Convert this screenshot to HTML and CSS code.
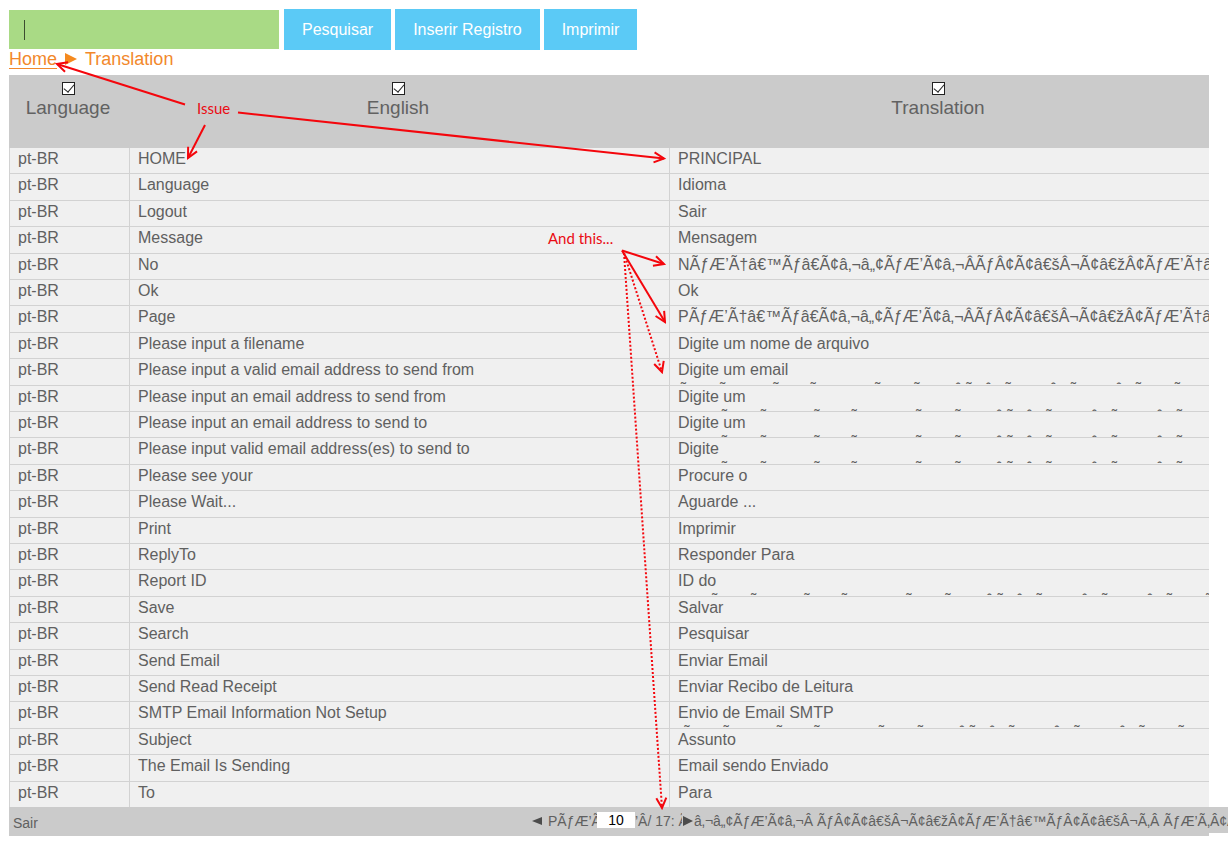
FILE: index.html
```html
<!DOCTYPE html>
<html lang="pt-BR">
<head>
<meta charset="utf-8">
<title>Translation</title>
<link rel="stylesheet" href="styles.css">
</head>
<body>
<main class="page">
  <form class="toolbar">
    <label class="search"><input class="search-input" type="text" aria-label="Pesquisar"></label>
    <button class="btn" type="button">Pesquisar</button>
    <button class="btn" type="button">Inserir Registro</button>
    <button class="btn" type="button">Imprimir</button>
  </form>
  <nav class="crumbs">
    <a href="#">Home</a>
    <svg class="crumb-arrow" viewBox="0 0 12 12" aria-hidden="true"><path d="M0 0 12 6 0 12Z"/></svg>
    <span>Translation</span>
  </nav>
  <table class="grid">
    <thead>
      <tr>
        <th class="col-lang"><label class="head"><input class="tick" type="checkbox" checked>Language</label></th>
        <th><label class="head"><input class="tick" type="checkbox" checked>English</label></th>
        <th><label class="head"><input class="tick" type="checkbox" checked>Translation</label></th>
      </tr>
    </thead>
    <tbody>
      <tr><td>pt-BR</td><td>HOME</td><td>PRINCIPAL</td></tr>
      <tr><td>pt-BR</td><td>Language</td><td>Idioma</td></tr>
      <tr><td>pt-BR</td><td>Logout</td><td>Sair</td></tr>
      <tr><td>pt-BR</td><td>Message</td><td>Mensagem</td></tr>
      <tr><td>pt-BR</td><td>No</td><td><div class="clip">NÃƒÆ’Ã†â€™Ãƒâ€Ã¢â‚¬â„¢ÃƒÆ’Ã¢â‚¬ÂÃƒÂ¢Ã¢â€šÂ¬Ã¢â€žÂ¢ÃƒÆ’Ã†â€</div></td></tr>
      <tr><td>pt-BR</td><td>Ok</td><td>Ok</td></tr>
      <tr><td>pt-BR</td><td>Page</td><td><div class="clip">PÃƒÆ’Ã†â€™Ãƒâ€Ã¢â‚¬â„¢ÃƒÆ’Ã¢â‚¬ÂÃƒÂ¢Ã¢â€šÂ¬Ã¢â€žÂ¢ÃƒÆ’Ã†â€</div></td></tr>
      <tr><td>pt-BR</td><td>Please input a filename</td><td>Digite um nome de arquivo</td></tr>
      <tr><td>pt-BR</td><td>Please input a valid email address to send from</td><td><div class="clip">Digite um email<br>ÃƒÆ’Ã†â€™Ãƒâ€Ã¢â‚¬â„¢ÃƒÆ’Ã¢â‚¬ÂÃƒÂ¢Ã¢â€šÂ¬Ã¢â€žÂ¢ÃƒÆ’Ã†</div></td></tr>
      <tr><td>pt-BR</td><td>Please input an email address to send from</td><td><div class="clip">Digite um<br>enderÃƒÆ’Ã†â€™Ãƒâ€Ã¢â‚¬â„¢ÃƒÆ’Ã¢â‚¬ÂÃƒÂ¢Ã¢â€šÂ¬Ã¢â€žÂ¢ÃƒÆ’Ã†</div></td></tr>
      <tr><td>pt-BR</td><td>Please input an email address to send to</td><td><div class="clip">Digite um<br>enderÃƒÆ’Ã†â€™Ãƒâ€Ã¢â‚¬â„¢ÃƒÆ’Ã¢â‚¬ÂÃƒÂ¢Ã¢â€šÂ¬Ã¢â€žÂ¢ÃƒÆ’Ã†</div></td></tr>
      <tr><td>pt-BR</td><td>Please input valid email address(es) to send to</td><td><div class="clip">Digite<br>enderÃƒÆ’Ã†â€™Ãƒâ€Ã¢â‚¬â„¢ÃƒÆ’Ã¢â‚¬ÂÃƒÂ¢Ã¢â€šÂ¬Ã¢â€žÂ¢ÃƒÆ’Ã†</div></td></tr>
      <tr><td>pt-BR</td><td>Please see your</td><td>Procure o</td></tr>
      <tr><td>pt-BR</td><td>Please Wait...</td><td>Aguarde ...</td></tr>
      <tr><td>pt-BR</td><td>Print</td><td>Imprimir</td></tr>
      <tr><td>pt-BR</td><td>ReplyTo</td><td>Responder Para</td></tr>
      <tr><td>pt-BR</td><td>Report ID</td><td><div class="clip">ID do<br>relatÃƒÆ’Ã†â€™Ãƒâ€Ã¢â‚¬â„¢ÃƒÆ’Ã¢â‚¬ÂÃƒÂ¢Ã¢â€šÂ¬Ã¢â€žÂ¢ÃƒÆ’Ã†</div></td></tr>
      <tr><td>pt-BR</td><td>Save</td><td>Salvar</td></tr>
      <tr><td>pt-BR</td><td>Search</td><td>Pesquisar</td></tr>
      <tr><td>pt-BR</td><td>Send Email</td><td>Enviar Email</td></tr>
      <tr><td>pt-BR</td><td>Send Read Receipt</td><td>Enviar Recibo de Leitura</td></tr>
      <tr><td>pt-BR</td><td>SMTP Email Information Not Setup</td><td><div class="clip">Envio de Email SMTP<br>iÃƒÆ’Ã†â€™Ãƒâ€Ã¢â‚¬â„¢ÃƒÆ’Ã¢â‚¬ÂÃƒÂ¢Ã¢â€šÂ¬Ã¢â€žÂ¢ÃƒÆ’Ã†</div></td></tr>
      <tr><td>pt-BR</td><td>Subject</td><td>Assunto</td></tr>
      <tr><td>pt-BR</td><td>The Email Is Sending</td><td>Email sendo Enviado</td></tr>
      <tr><td>pt-BR</td><td>To</td><td>Para</td></tr>
    </tbody>
  </table>
  <footer class="footer">
    <a class="logout" href="#">Sair</a>
    <div class="pager">
      <button class="step" type="button" aria-label="Anterior"><svg viewBox="0 0 10 10"><path d="M10 1V9L0 5Z"/></svg></button>
      <span class="piece piece-label">PÃƒÆ’Ã†</span>
      <input class="page-no" type="text" value="10" aria-label="Page">
      <span class="piece piece-total">’Â/ 17: Ã</span>
      <button class="step" type="button" aria-label="Seguinte"><svg viewBox="0 0 10 10"><path d="M0 0V10L10 5Z"/></svg></button>
      <span>â‚¬â„¢ÃƒÆ’Ã¢â‚¬Â ÃƒÂ¢Ã¢â€šÂ¬Ã¢â€žÂ¢ÃƒÆ’Ã†â€™ÃƒÂ¢Ã¢â€šÂ¬Ã‚Â ÃƒÆ’Ã‚Â¢Ã¢</span>
    </div>
  </footer>
</main>
<svg class="notes" width="1228" height="845" viewBox="0 0 1228 845">
  <defs>
    <marker id="tip" viewBox="0 0 14 14" refX="12" refY="7" markerWidth="14" markerHeight="14" markerUnits="userSpaceOnUse" orient="auto">
      <path d="M2 2 12 7 2 12"/>
    </marker>
  </defs>
  <g class="solid">
    <path d="M185 104.500 57 64"/>
    <path d="M205 125 188 158"/>
    <path d="M238 112.500 664 158.500"/>
    <path d="M622 250.500 664 264"/>
    <path d="M622 250.500 665 322"/>
  </g>
  <g class="dotted">
    <path d="M624 253 662 372"/>
    <path d="M624 253 662 808"/>
  </g>
  <text x="197" y="114">Issue</text>
  <text x="548" y="244">And this...</text>
</svg>
</body>
</html>
```
FILE: styles.css
```css
* { box-sizing: border-box; }

body {
  position: relative;
  margin: 0;
  overflow: hidden;
  background: #fff;
  color: #606060;
  font: 16px/20px "Liberation Sans", Arial, sans-serif;
}

input, button { font: inherit; }

.page { padding: 9px 19px 9px 9px; }

.toolbar { display: flex; align-items: center; gap: 4px; height: 41px; }

.search { position: relative; width: 270px; margin-right: 1px; }

.search-input {
  display: block;
  width: 100%;
  height: 39px;
  padding: 0 15px;
  border: 0;
  background: #a9da85;
}

.search::after {
  content: "";
  position: absolute;
  left: 15px;
  top: 10px;
  width: 1px;
  height: 20px;
  background: #3c4c30;
}

.btn {
  height: 41px;
  padding: 0 18px;
  border: 0;
  background: #5bcaf6;
  color: #fff;
}

.crumbs {
  display: flex;
  align-items: center;
  gap: 8px;
  height: 25px;
  padding-bottom: 7px;
  color: #f2882b;
  font-size: 18px;
}

.crumbs a { color: inherit; text-underline-offset: 3px; text-decoration-thickness: 1px; }
.crumb-arrow { width: 12px; height: 12px; fill: #f58a1f; }

.grid {
  width: 100%;
  border-collapse: separate;
  border-spacing: 0;
  table-layout: fixed;
  background: #f0f0f0;
}

.grid th {
  height: 73px;
  padding: 7px 2px 0 0;
  background: #cbcbcb;
  font-size: 19px;
  font-weight: normal;
  vertical-align: top;
  color: #626262;
}

.grid .col-lang { width: 10%; }

.head { display: flex; flex-direction: column; align-items: center; gap: 3px; }

.tick {
  appearance: none;
  width: 13px;
  height: 13px;
  margin: 0;
  border: 1px solid #222;
  background: #fff;
}

.tick:checked::after {
  content: "";
  display: block;
  width: 9px;
  height: 5px;
  margin: 2px 1px;
  border: solid #222;
  border-width: 0 0 1px 1px;
  transform: translateY(-1px) rotate(-50deg);
}

.grid td {
  height: 26px;
  padding: 1px 0 0 8px;
  border-bottom: 1px solid #d2d2d2;
  border-left: 1px solid #d2d2d2;
  vertical-align: top;
  white-space: nowrap;
}

.grid tr:nth-child(5n+2) td,
.grid tr:nth-child(5n+4) td { height: 27px; }
.grid tbody tr:last-child td { height: 25px; border-bottom: 0; }

.clip {
  height: 25px;
  margin-top: -1px;
  overflow: hidden;
  line-height: 22px;
}

.footer {
  display: grid;
  grid-template-columns: 43.5% max-content;
  height: 29px;
  background: #cbcbcb;
  font-size: 14px;
}

.logout { padding: 6px 4px 0; color: inherit; text-decoration: none; }

.pager {
  display: flex;
  align-items: center;
  height: 26px;
  padding-top: 2px;
  background: #cbcbcb;
  white-space: nowrap;
}

.step { width: 12px; height: 12px; padding: 1px; border: 0; background: none; }
.step svg { display: block; width: 10px; height: 10px; fill: #4c4c4c; }

.piece { overflow: hidden; }
.piece-label { width: 49px; margin-left: 5px; }
.piece-total { width: 47px; }

.page-no {
  width: 38px;
  height: 16px;
  margin-bottom: 3px;
  padding: 0;
  border: 0;
  background: #fff;
  color: #000;
  text-align: center;
}

.notes { position: absolute; left: 0; top: 0; pointer-events: none; }
.notes path { fill: none; stroke: #f4060c; stroke-width: 2; }
.notes .solid path, .notes .dotted path { marker-end: url(#tip); }
.notes .dotted path { stroke-dasharray: 2 2; }
.notes text { fill: #ea0c14; font: 15px Lato, sans-serif; }
```
